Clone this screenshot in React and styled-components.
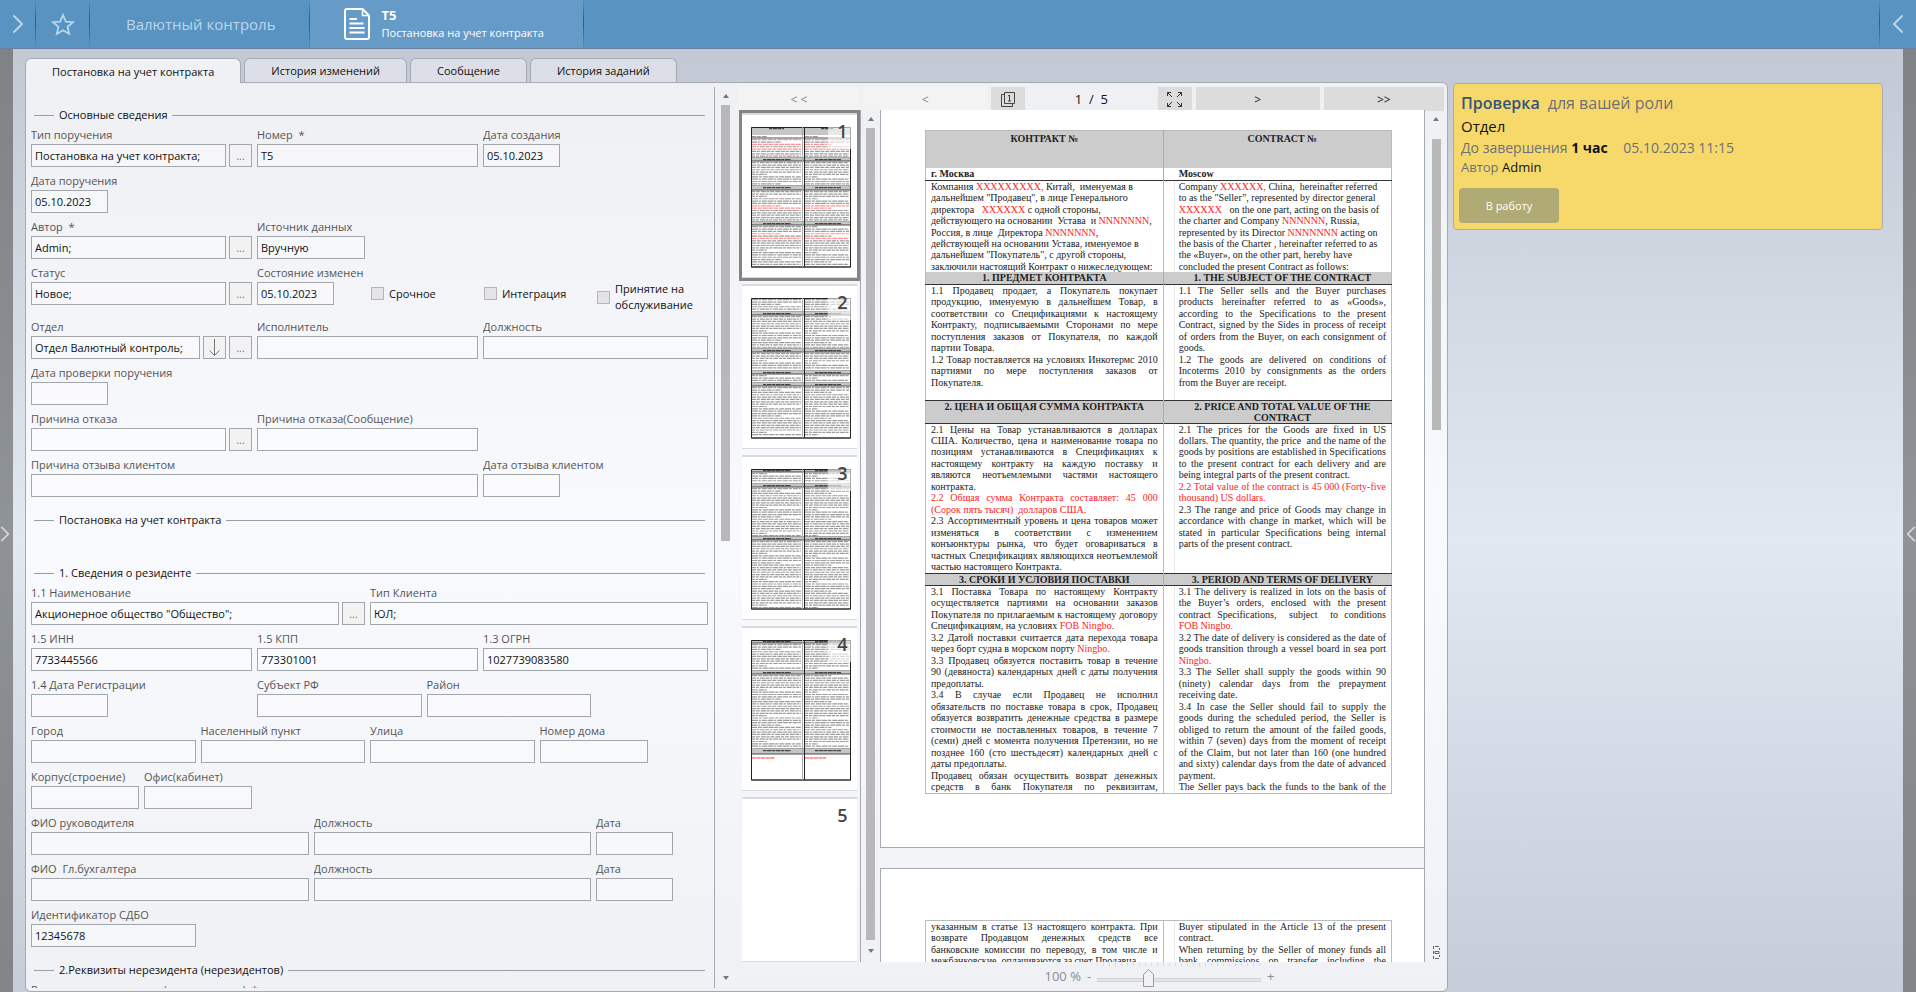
import { useId } from 'react';
import styled, { createGlobalStyle, css } from 'styled-components';

const GlobalStyle = createGlobalStyle`
  * {
    box-sizing: border-box;
  }

  body {
    margin: 0;
    font-family: 'Open Sans', 'Noto Sans', sans-serif;
    font-size: 11px;
    color: #111;
  }

  button, input {
    font: inherit;
    color: inherit;
  }

  button {
    padding: 0;
    border: 0;
    background: none;
  }
`;

// Shell

const Shell = styled.div`
  height: 100vh;
  display: grid;
  grid-template-rows: 49px minmax(0, 1fr);
  overflow: hidden;
`;

const TopBar = styled.header`
  display: flex;
  background: #5893c1;
  border-bottom: 1px solid #6b7fa3;
  color: #bcd6ea;
`;

const divider = css`
  border-image: linear-gradient(to bottom, #5893c1, #135f9f 45%, #5893c1) 1;
`;

const BarButton = styled.button`
  width: ${({ $width }) => $width}px;
  display: flex;
  align-items: center;
  justify-content: center;
  ${({ $side }) => ($side === 'left' ? 'border-left: 1px solid;' : 'border-right: 1px solid;')}
  ${divider}
`;

const SectionLink = styled.a`
  display: flex;
  align-items: center;
  padding: 0 33px 0 36px;
  border-right: 1px solid;
  ${divider}
  color: inherit;
  font-size: 15px;
  text-decoration: none;
`;

const ActiveDocument = styled.a`
  width: 274px;
  display: flex;
  align-items: center;
  gap: 12px;
  padding-left: 34px;
  background: #669bc8;
  border-right: 1px solid;
  ${divider}
  color: #fff;
  text-decoration: none;

  span {
    display: block;
    line-height: 18px;
  }

  strong {
    display: block;
    font-size: 13px;
    line-height: 18px;
  }
`;

const BarSpacer = styled.div`
  flex: 1;
`;

const Body = styled.div`
  min-height: 0;
  display: grid;
  grid-template-columns: 13px minmax(0, 1fr) 13px;
  grid-template-rows: minmax(0, 1fr);
`;

const Rail = styled.button`
  display: flex;
  align-items: center;
  justify-content: ${({ $side }) => ($side === 'left' ? 'flex-start' : 'flex-end')};
  padding-top: 26px;
  background: linear-gradient(#808285, #8f9296 50%, #828487);
  color: #d5d9de;
`;

const Main = styled.main`
  min-height: 0;
  display: grid;
  grid-template-columns: minmax(0, 1423fr) minmax(0, 430fr);
  grid-template-rows: minmax(0, 1fr);
  gap: 5px;
  padding: 9px 20px 0 12px;
  background: linear-gradient(#c3c9d4, #e1e8f2 52%, #c6cdd9);
`;

const Workspace = styled.section`
  min-height: 0;
  display: flex;
  flex-direction: column;
`;

// Tabs

const TabList = styled.div`
  display: flex;
  gap: 3px;
`;

const Tab = styled.button`
  height: ${({ $active }) => ($active ? '25px' : '24px')};
  margin-bottom: ${({ $active }) => ($active ? '-1px' : '0')};
  padding: 0 26px;
  border: 1px solid #a5a9b1;
  border-bottom: 0;
  border-radius: 6px 6px 0 0;
  background: ${({ $active }) => ($active ? '#f0f1f5' : '#dcdfe7')};
  position: relative;
`;

const Panel = styled.div`
  flex: 1;
  min-height: 0;
  display: grid;
  grid-template-columns: minmax(0, 689fr) 24px 122px 19px minmax(0, 545fr) 22px;
  grid-template-rows: 27px minmax(0, 1fr) 29px;
  border: 1px solid #a5a9b1;
  border-radius: 0 6px 6px 6px;
  background: linear-gradient(#eff0f4, #f9fafe 50%, #eff1f5);
`;

// Order form

const Form = styled.form`
  grid-row: 1 / -1;
  margin: 4px 0 3px;
  padding: 5px 5px 0;
  overflow: hidden;
  border-right: 1px solid #a5a9b1;
`;

const Legend = styled.h2`
  height: 20px;
  display: flex;
  align-items: center;
  gap: 5px;
  margin: ${({ $gap }) => $gap}px 4px -1px 3px;
  font-size: inherit;
  font-weight: 400;
  line-height: 20px;

  &:before,
  &:after {
    content: '';
    height: 1px;
    background: #9a9da3;
  }

  &:before {
    width: 20px;
  }

  &:after {
    flex: 1;
  }
`;

const FormRow = styled.div`
  display: grid;
  grid-template-columns: repeat(12, minmax(0, 1fr));
  padding-bottom: 3px;
`;

const FieldCell = styled.div`
  grid-column: span ${({ $span }) => $span};
  min-width: 0;
  padding-right: ${({ $edge }) => ($edge ? 1 : 5)}px;

  label {
    display: block;
    height: 20px;
    overflow: hidden;
    color: #555;
    line-height: 22px;
    white-space: pre;
  }
`;

const Control = styled.div`
  display: flex;
  gap: 3px;
`;

const TextInput = styled.input`
  flex: ${({ $date }) => ($date ? '0 0 77px' : '1 1 0')};
  min-width: 0;
  height: 23px;
  padding: 0 3px;
  border: 1px solid #a3a6ab;
  border-radius: 0;
  background: rgba(255, 255, 255, 0.4);
  outline: 0;
`;

const PickButton = styled.button`
  width: 23px;
  height: 23px;
  display: flex;
  align-items: center;
  justify-content: center;
  border: 1px solid #a3a6ab;
  background: #f2f2f2;
  color: #777;
`;

const CheckCell = styled.label`
  grid-column: span 2;
  min-height: 25px;
  display: flex;
  align-items: center;
  align-self: start;
  gap: 5px;
  margin-top: 19px;
  padding-left: 1px;
  line-height: 16px;

  input {
    flex: none;
    appearance: none;
    width: 13px;
    height: 13px;
    margin: 0;
    border: 1px solid #b4b6ba;
    background: #e4e4e4;
  }
`;

const Field = ({ label, value, span, edge, date, pick, arrow }) => {
  const id = useId();
  return (
    <FieldCell $span={span} $edge={edge}>
      <label htmlFor={id}>{label}</label>
      <Control>
        <TextInput id={id} defaultValue={value} $date={date} />
        {arrow && (
          <PickButton type="button" aria-label="Вниз">
            <svg width="13" height="19" viewBox="0 0 13 19" fill="none" stroke="#777">
              <path d="M6.5 1v16M1.5 12.5l5 5 5-5" />
            </svg>
          </PickButton>
        )}
        {pick && <PickButton type="button">...</PickButton>}
      </Control>
    </FieldCell>
  );
};

const Check = ({ children }) => (
  <CheckCell>
    <input type="checkbox" />
    <span>{children}</span>
  </CheckCell>
);

// Scroll bars

const ScrollTrack = styled.div`
  grid-row: ${({ $full }) => ($full ? '1 / -1' : '2')};
  display: grid;
  grid-template-rows: ${({ $rows }) => $rows};
  justify-items: center;
  align-items: center;
  margin: ${({ $full }) => ($full ? '4px 0' : '0')};
  padding-right: ${({ $shift }) => $shift || 0}px;
`;

const ScrollThumb = styled.div`
  width: 9px;
  height: 100%;
  background: #b8b8b8;
`;

const Arrow = ({ down }) => (
  <svg width="6" height="4" viewBox="0 0 6 4" fill="#777">
    <path d={down ? 'M0 0h6L3 4z' : 'M0 4h6L3 0z'} />
  </svg>
);

// Viewer tool bar

const ViewerBar = styled.div`
  grid-column: 3 / -1;
  display: grid;
  grid-template-columns: 120px minmax(0, 124fr) 34px minmax(0, 124fr) 34px minmax(0, 124fr) minmax(0, 120fr);
  gap: 4px;
  padding: 4px 3px 0 0;
`;

const NavButton = styled.button`
  background: ${({ disabled }) => (disabled ? '#f3f3f3' : '#dcdcdc')};
  color: ${({ disabled }) => (disabled ? '#888' : '#222')};
  display: flex;
  align-items: center;
  justify-content: center;
  padding-top: 1px;
  font-size: 12px;
`;

const PageCounter = styled.div`
  font-size: 13px;
  line-height: 24px;
  text-align: center;
`;

// Thumbnails

const ThumbList = styled.div`
  grid-column: 3;
  grid-row: 2;
  display: flex;
  flex-direction: column;
  overflow: hidden;
  border-right: 1px solid #a5a9b1;
`;

const Thumb = styled.button`
  flex: none;
  width: 121px;
  height: 171px;
  position: relative;
  border: 3px solid ${({ $active }) => ($active ? '#858585' : 'transparent')};
  background: linear-gradient(#d8dade, #d8dade) 0 0 / 100% 2px no-repeat content-box,
    linear-gradient(#d8dade, #d8dade) 0 100% / 100% 1px no-repeat content-box,
    linear-gradient(#fff, #fff) content-box;

  svg {
    display: block;
    margin: 13px auto 9px 9px;
  }
`;

const ThumbNumber = styled.span`
  position: absolute;
  top: 2px;
  right: 0;
  width: 29px;
  height: 34px;
  background: rgba(255, 255, 255, 0.6);
  color: #444;
  font-size: 18px;
  font-weight: 600;
  line-height: 32px;
  text-align: center;
`;

// kind, height, red lines
const THUMB_PAGES = [
  [
    ['fill', 8], ['text', 3], ['text', 20, [0, 2, 4]], ['head', 3], ['text', 25], ['head', 4],
    ['text', 32, [6, 7]], ['head', 3], ['text', 42, [3, 5]],
  ],
  [
    ['text', 14], ['head', 3], ['text', 34], ['head', 3], ['text', 19], ['head', 3],
    ['text', 9], ['head', 3], ['text', 52],
  ],
  [['head', 3], ['text', 12], ['head', 3], ['text', 50], ['head', 3], ['text', 69]],
  [['head', 3], ['text', 28], ['head', 3], ['text', 75], ['head', 5], ['last', 26]],
  [],
];

const ThumbPicture = ({ rows, seed }) => {
  const shapes = [];
  let y = 0;
  rows.forEach(([kind, height, red = []], index) => {
    if (kind === 'head' || kind === 'fill') {
      shapes.push(<rect key={`f${index}`} x="0" y={y} width="100" height={height} fill="#c6c6c6" />);
      shapes.push(
        <path
          key={`h${index}`}
          d={kind === 'fill' ? `M18 ${y + 1.6}h15M70 ${y + 1.6}h13` : `M12 ${y + 1.6}h28M64 ${y + 1.6}h26`}
          stroke="#444"
          strokeWidth="1.4"
          strokeDasharray="3 .6 5 .5"
        />
      );
    }
    if (kind === 'text') {
      const count = Math.floor((height - 0.5) / 2.35);
      for (let line = 0; line < count; line += 1) {
        const lineY = y + 1.7 + line * 2.35;
        [1, 54].forEach((x, side) => {
          const isRed = red.includes(line);
          const roll = (line * 7 + index * 5 + seed * 3 + side * 4) % 11;
          const full = side ? 44 : 49;
          const width = roll === 0 || height < 4 ? full * 0.3 : roll === 6 ? full * 0.6 : full;
          shapes.push(
            <path
              key={`${index}-${line}-${side}`}
              d={`M${x} ${lineY}h${width}`}
              stroke={isRed ? '#ff9090' : '#9c9c9c'}
              strokeWidth="1.2"
              strokeDasharray={`${3 + (roll % 4)} .8 ${2 + (roll % 3)} 1 5 .7`}
            />
          );
        });
      }
    }
    if (kind === 'last') {
      shapes.push(
        <path key="last" d={`M1 ${y + 4}h23M54 ${y + 4}h21`} stroke="#ff7a7a" strokeWidth="1.3" strokeDasharray="4 .5" />
      );
    }
    y += height;
    if (kind !== 'fill') {
      shapes.push(<path key={`b${index}`} d={`M0 ${y}h100`} stroke="#222" strokeWidth=".8" />);
    }
  });
  return (
    <svg width="100" height="141" viewBox="0 0 100 141" aria-hidden="true">
      {shapes}
      {rows.length > 0 && (
        <>
          <path d="M.5 .5h99v139.500h-99z" fill="none" stroke="#222" />
          <path d="M51.500 0v140" stroke="#aaa" />
          <path d="M53.500 0v140" stroke="#222" />
        </>
      )}
    </svg>
  );
};

// Contract pages

const Pages = styled.div`
  grid-column: 5;
  grid-row: 2;
  display: flex;
  flex-direction: column;
  gap: 20px;
  overflow: hidden;
  border-right: 1px solid #a5a9b1;
`;

const Page = styled.article`
  flex: none;
  padding: ${({ $first }) => ($first ? '20px 32px 53px 44px' : '51px 32px 0 44px')};
  border: solid #a5a9b1;
  border-width: ${({ $first }) => ($first ? '0 0 1px 1px' : '1px 0 0 1px')};
  background: #fff;
`;

const ContractTable = styled.table`
  width: 100%;
  table-layout: fixed;
  border-collapse: collapse;
  border: 1px solid #bbb;
  color: #222;
  font-family: 'Liberation Serif', serif;
  font-size: 10px;
  line-height: 11px;
`;

const ContractRow = styled.tr`
  height: ${({ $height }) => $height}px;
  background: ${({ $head }) => ($head ? '#ccc' : '#fff')};
  border-top: ${({ $over }) => ($over ? '1px solid #333' : '0')};
  border-bottom: ${({ $under }) => ($under ? '1px solid #333' : '0')};
`;

const ContractHead = styled.th`
  padding: ${({ $top }) => ($top ? '2px 5px 0' : '0 5px')};
  vertical-align: top;
  text-align: ${({ $left }) => ($left ? 'left' : 'center')};
  font-weight: 700;

  &:last-child {
    border-left: 1px solid #aaa;
    padding-left: 15px;
  }
`;

const ContractCell = styled.td`
  padding: 0 5px;
  vertical-align: top;

  &:last-child {
    border-left: 1px solid #bbb;
    padding-left: 15px;
    background: linear-gradient(#e8e8e8, #e8e8e8) 10px 0 / 1px 100% no-repeat;
  }
`;

const Lines = styled.div`
  height: ${({ $height }) => $height}px;
  display: grid;
  grid-template-columns: minmax(0, 1fr);
  grid-template-rows: repeat(${({ $count }) => $count}, minmax(0, 1fr));
`;

const Line = styled.div`
  white-space: nowrap;
  text-align-last: ${({ $justify }) => ($justify ? 'justify' : 'left')};

  em {
    color: #f22;
    font-style: normal;
  }
`;

// a trailing "|" ends a paragraph, {braces} mark the red wording
const CONTRACT = [
  { head: ['КОНТРАКТ №', 'CONTRACT №'], height: 37, top: true },
  { head: ['г. Москва', 'Moscow'], height: 13, left: true, under: true },
  {
    height: 91,
    count: 8,
    ru: [
      'Компания {XXXXXXXXX,} Китай,\u00a0 именуемая в|',
      'дальнейшем "Продавец", в лице Генерального|',
      'директора\u00a0\u00a0 {XXXXXX} с одной стороны,|',
      'действующего на основании\u00a0 Устава\u00a0 и {NNNNNNN},|',
      'Россия, в лице\u00a0 Директора {NNNNNNN},|',
      'действующей на основании Устава, именуемое в|',
      'дальнейшем "Покупатель", с другой стороны,|',
      'заключили настоящий Контракт о нижеследующем:|',
    ],
    en: [
      'Company {XXXXXX,} China,\u00a0 hereinafter referred|',
      'to as the "Seller”, represented by director general|',
      '{XXXXXX}\u00a0\u00a0 on the one part, acting on the basis of|',
      'the charter and Company {NNNNNN}, Russia,|',
      'represented by its Director {NNNNNNN} acting on|',
      'the basis of the Charter , hereinafter referred to as|',
      'the «Buyer», on the other part, hereby have|',
      'concluded the present Contract as follows:|',
    ],
  },
  { head: ['1. ПРЕДМЕТ КОНТРАКТА', '1. THE SUBJECT OF THE CONTRACT'], height: 12, under: true },
  {
    height: 115,
    count: 10,
    ru: [
      '1.1 Продавец продает, а Покупатель покупает',
      'продукцию, именуемую в дальнейшем Товар, в',
      'соответствии со Спецификациями к настоящему',
      'Контракту, подписываемыми Сторонами по мере',
      'поступления заказов от Покупателя, по каждой',
      'партии Товара.|',
      '1.2 Товар поставляется на условиях Инкотермс 2010',
      'партиями по мере поступления заказов от',
      'Покупателя.|',
    ],
    en: [
      '1.1 The Seller sells and the Buyer purchases',
      'products hereinafter referred to as «Goods»,',
      'according to the Specifications to the present',
      'Contract, signed by the Sides in process of receipt',
      'of orders from the Buyer, on each consignment of',
      'goods.|',
      '1.2 The goods are delivered on conditions of',
      'Incoterms 2010 by consignments as the orders',
      'from the Buyer are receipt.|',
    ],
  },
  {
    head: ['2. ЦЕНА И ОБЩАЯ СУММА КОНТРАКТА', '2. PRICE AND TOTAL VALUE OF THE CONTRACT'],
    height: 23,
    over: true,
    under: true,
  },
  {
    height: 149,
    count: 13,
    ru: [
      '2.1 Цены на Товар устанавливаются в долларах',
      'США. Количество, цена и наименование товара по',
      'позициям устанавливаются в Спецификациях к',
      'настоящему контракту на каждую поставку и',
      'являются неотъемлемыми частями настоящего',
      'контракта.|',
      '{2.2 Общая сумма Контракта составляет: 45 000}',
      '{(Сорок пять тысяч)\u00a0 долларов США.}|',
      '2.3 Ассортиментный уровень и цена товаров может',
      'изменяться в соответствии с изменением',
      'конъюнктуры рынка, что будет оговариваться в',
      'частных Спецификациях являющихся неотъемлемой',
      'частью настоящего Контракта.|',
    ],
    en: [
      '2.1 The prices for the Goods are fixed in US',
      'dollars. The quantity, the price\u00a0 and the name of the',
      'goods by positions are established in Specifications',
      'to the present contract for each delivery and are',
      'being integral parts of the present contract.|',
      '{2.2 Total value of the contract is 45 000 (Forty-five}',
      '{thousand) US dollars.}|',
      '2.3 The range and price of Goods may change in',
      'accordance with change in market, which will be',
      'stated in particular Specifications being internal',
      'parts of the present contract.|',
    ],
  },
  {
    head: ['3. СРОКИ И УСЛОВИЯ ПОСТАВКИ', '3. PERIOD AND TERMS OF DELIVERY'],
    height: 12,
    over: true,
    under: true,
  },
  {
    height: 207,
    count: 18,
    ru: [
      '3.1 Поставка Товара по настоящему Контракту',
      'осуществляется партиями на основании заказов',
      'Покупателя по прилагаемым к настоящему договору',
      'Спецификациям, на условиях {FOB Ningbo.}|',
      '3.2 Датой поставки считается дата перехода товара',
      'через борт судна в морском порту {Ningbo.}|',
      '3.3 Продавец обязуется поставить товар в течение',
      '90 (девяноста) календарных дней с даты получения',
      'предоплаты.|',
      '3.4 В случае если Продавец не исполнил',
      'обязательств по поставке товара в срок, Продавец',
      'обязуется возвратить денежные средства в размере',
      'стоимости не поставленных товаров, в течение 7',
      '(семи) дней с момента получения Претензии, но не',
      'позднее 160 (сто шестьдесят) календарных дней с',
      'даты предоплаты.|',
      'Продавец обязан осуществить возврат денежных',
      'средств в банк Покупателя по реквизитам,',
    ],
    en: [
      '3.1 The delivery is realized in lots on the basis of',
      'the Buyer’s orders, enclosed with the present',
      'contract Specifications,\u00a0 subject\u00a0 to conditions',
      '{FOB Ningbo.}|',
      '3.2 The date of delivery is considered as the date of',
      'goods transition through a vessel board in sea port',
      '{Ningbo.}|',
      '3.3 The Seller shall supply the goods within 90',
      '(ninety) calendar days from the prepayment',
      'receiving date.|',
      '3.4 In case the Seller should fail to supply the',
      'goods during the scheduled period, the Seller is',
      'obliged to return the amount of the failed goods,',
      'within 7 (seven) days from the moment of receipt',
      'of the Claim, but not later than 160 (one hundred',
      'and sixty) calendar days from the date of advanced',
      'payment.|',
      'The Seller pays back the funds to the bank of the',
    ],
  },
];

const CONTRACT_NEXT = [
  {
    height: 58,
    count: 5,
    ru: [
      'указанным в статье 13 настоящего контракта. При',
      'возврате Продавцом денежных средств все',
      'банковские комиссии по переводу, в том числе и',
      'межбанковские, оплачиваются за счет Продавца.|',
    ],
    en: [
      'Buyer stipulated in the Article 13 of the present',
      'contract.|',
      'When returning by the Seller of money funds all',
      'bank commissions on transfer including the',
    ],
  },
];

const renderLine = (source, index) => {
  const justify = !source.endsWith('|');
  const parts = source.replace('|', '').split(/[{}]/);
  return (
    <Line key={index} $justify={justify}>
      {parts.map((part, i) => (i % 2 ? <em key={i}>{part}</em> : part))}
    </Line>
  );
};

const Contract = ({ rows }) => (
  <ContractTable>
    <colgroup>
      <col width="51%" />
      <col width="49%" />
    </colgroup>
    <tbody>
      {rows.map((row, index) =>
        row.head ? (
          <ContractRow key={index} $height={row.height} $head={!row.left} $over={row.over} $under={row.under}>
            {row.head.map((text) => (
              <ContractHead key={text} $left={row.left} $top={row.top}>
                {text}
              </ContractHead>
            ))}
          </ContractRow>
        ) : (
          <ContractRow key={index} $height={row.height}>
            {[row.ru, row.en].map((lines, side) => (
              <ContractCell key={side}>
                <Lines $height={row.height} $count={row.count}>
                  {lines.map(renderLine)}
                </Lines>
              </ContractCell>
            ))}
          </ContractRow>
        )
      )}
    </tbody>
  </ContractTable>
);

// Zoom bar

const ZoomBar = styled.div`
  grid-column: 3 / -1;
  grid-row: 3;
  display: flex;
  justify-content: center;
  gap: 6px;
  padding-right: 24px;
  padding-left: 157px;
  color: #8a8d92;
  font-size: 13px;
  line-height: 28px;

  button {
    align-self: start;
    line-height: 28px;
  }
`;

const ZoomRange = styled.input`
  appearance: none;
  width: 164px;
  height: 26px;
  margin: 0;
  background:
    repeating-linear-gradient(to right, #d8dade 0 1px, transparent 1px 6px) 0 1px / 100% 3px no-repeat,
    linear-gradient(#d0d2d5, #d0d2d5) 0 16px / 100% 1px no-repeat,
    linear-gradient(#d0d2d5, #d0d2d5) 0 19px / 100% 1px no-repeat,
    linear-gradient(#e6e6e6, #e6e6e6) 0 17px / 100% 2px no-repeat;

  &::-webkit-slider-runnable-track {
    height: 18px;
    margin-top: 5px;
  }

  &::-webkit-slider-thumb {
    appearance: none;
    width: 11px;
    height: 18px;
    background: url("data:image/svg+xml,%3Csvg xmlns='http://www.w3.org/2000/svg' width='11' height='18'%3E%3Cpath d='M.5 5.500l5-5 5 5v12H.5z' fill='%23f2f2f2' stroke='%23999'/%3E%3C/svg%3E");
  }
`;

const FitIcon = () => (
  <svg width="7" height="13" viewBox="0 0 7 13" fill="none" stroke="#666">
    <path d="M.5 0v3M.5 5v3M.5 10v3M2 .5h4M2 12.500h4M6.500 2v2M6.500 9v2" />
    <path d="M2 5.500h4v2H2z" />
  </svg>
);

// Task card

const TaskCard = styled.aside`
  align-self: start;
  min-height: 147px;
  margin-top: 25px;
  padding: 8px 5px 5px 7px;
  border: 1px solid #a9abb0;
  border-radius: 4px;
  background: #f7d96b;
  color: #6f7075;

  h3, p {
    margin: 0;
    font-weight: 400;
  }

  h3 {
    font-size: 16px;
    line-height: 22px;
  }

  h3 strong {
    margin-right: 8px;
    color: #34567d;
    font-weight: 600;
  }

  b {
    color: #111;
  }

  span {
    color: #111;
  }
`;

const TaskLine = styled.p`
  font-size: ${({ $size }) => $size}px;
  line-height: ${({ $height }) => $height}px;

  time {
    margin-left: 12px;
  }
`;

const TakeButton = styled.button`
  width: 100px;
  height: 35px;
  margin: 12px 0 0 -2px;
  border-radius: 4px;
  background: #b0aa74;
  color: #fff;
`;

const TABS = ['Постановка на учет контракта', 'История изменений', 'Сообщение', 'История заданий'];

const Chevron = ({ left, width = 12, height = 20, stroke = 2 }) => (
  <svg width={width} height={height} viewBox="0 0 12 20" fill="none" stroke="currentColor" strokeWidth={stroke}>
    <path d={left ? 'M10.500 1.500L2 10l8.500 8.500' : 'M1.500 1.500L10 10l-8.500 8.500'} />
  </svg>
);

const OrderForm = () => (
  <Form onSubmit={(event) => event.preventDefault()}>
    <Legend $gap={13}>Основные сведения</Legend>
    <FormRow>
      <Field label="Тип поручения" value="Постановка на учет контракта;" span={4} pick />
      <Field label="Номер  *" value="Т5" span={4} />
      <Field label="Дата создания" value="05.10.2023" span={4} date />
    </FormRow>
    <FormRow>
      <Field label="Дата поручения" value="05.10.2023" span={4} date />
    </FormRow>
    <FormRow>
      <Field label="Автор  *" value="Admin;" span={4} pick />
      <Field label="Источник данных" value="Вручную" span={2} />
    </FormRow>
    <FormRow>
      <Field label="Статус" value="Новое;" span={4} pick />
      <Field label="Состояние изменен" value="05.10.2023" span={2} date />
      <Check>Срочное</Check>
      <Check>Интеграция</Check>
      <Check>Принятие на обслуживание</Check>
    </FormRow>
    <FormRow>
      <Field label="Отдел" value="Отдел Валютный контроль;" span={4} arrow pick />
      <Field label="Исполнитель" span={4} />
      <Field label="Должность" span={4} edge />
    </FormRow>
    <FormRow>
      <Field label="Дата проверки поручения" span={4} date />
    </FormRow>
    <FormRow>
      <Field label="Причина отказа" span={4} pick />
      <Field label="Причина отказа(Сообщение)" span={4} />
    </FormRow>
    <FormRow>
      <Field label="Причина отзыва клиентом" span={8} />
      <Field label="Дата отзыва клиентом" span={4} date />
    </FormRow>

    <Legend $gap={10}>Постановка на учет контракта</Legend>
    <Legend $gap={34}>1. Сведения о резиденте</Legend>
    <FormRow>
      <Field label="1.1 Наименование" value={'Акционерное общество "Общество";'} span={6} pick />
      <Field label="Тип Клиента" value="ЮЛ;" span={6} edge />
    </FormRow>
    <FormRow>
      <Field label="1.5 ИНН" value="7733445566" span={4} />
      <Field label="1.5 КПП" value="773301001" span={4} />
      <Field label="1.3 ОГРН" value="1027739083580" span={4} edge />
    </FormRow>
    <FormRow>
      <Field label="1.4 Дата Регистрации" span={4} date />
      <Field label="Субъект РФ" span={3} />
      <Field label="Район" span={3} />
    </FormRow>
    <FormRow>
      <Field label="Город" span={3} />
      <Field label="Населенный пункт" span={3} />
      <Field label="Улица" span={3} />
      <Field label="Номер дома" span={2} />
    </FormRow>
    <FormRow>
      <Field label="Корпус(строение)" span={2} />
      <Field label="Офис(кабинет)" span={2} />
    </FormRow>
    <FormRow>
      <Field label="ФИО руководителя" span={5} />
      <Field label="Должность" span={5} />
      <Field label="Дата" span={2} date />
    </FormRow>
    <FormRow>
      <Field label="ФИО  Гл.бухгалтера" span={5} />
      <Field label="Должность" span={5} />
      <Field label="Дата" span={2} date />
    </FormRow>
    <FormRow>
      <Field label="Идентификатор СДБО" value="12345678" span={3} />
    </FormRow>

    <Legend $gap={10}>2.Реквизиты нерезидента (нерезидентов)</Legend>
    <FormRow>
      <Field label="Реквизиты нерезидента (нерезидентов)  *" span={6} />
    </FormRow>
  </Form>
);

const App = () => {
  return (
    <>
      <GlobalStyle />
      <Shell>
        <TopBar>
          <BarButton $width={36} aria-label="Развернуть меню">
            <Chevron />
          </BarButton>
          <BarButton $width={54} aria-label="Избранное">
            <svg width="24" height="23" viewBox="0 0 24 23" fill="none" stroke="currentColor" strokeWidth="1.800">
              <path d="M12 2l2.800 6.600 7.200.6-5.500 4.700 1.700 7L12 17.200 5.800 20.900l1.700-7L2 9.200l7.200-.6z" />
            </svg>
          </BarButton>
          <SectionLink href="#currency">Валютный контроль</SectionLink>
          <ActiveDocument href="#order">
            <svg width="26" height="32" viewBox="0 0 26 32" fill="none" stroke="currentColor" strokeWidth="2">
              <path d="M3 1h15.500l6.500 6.500V29a2 2 0 0 1-2 2H3a2 2 0 0 1-2-2V3a2 2 0 0 1 2-2z" />
              <path d="M18.500 1v6.500H25" strokeWidth="1.500" />
              <path d="M5.500 11H13M5.500 15.500h14M5.500 20h15M5.500 24.500h15" />
            </svg>
            <span>
              <strong>Т5</strong>
              Постановка на учет контракта
            </span>
          </ActiveDocument>
          <BarSpacer />
          <BarButton $width={37} $side="left" aria-label="Развернуть панель">
            <Chevron left />
          </BarButton>
        </TopBar>

        <Body>
          <Rail $side="left" aria-label="Показать левую панель">
            <Chevron width={10} height={18} />
          </Rail>

          <Main>
            <Workspace>
              <TabList role="tablist">
                {TABS.map((tab, index) => (
                  <Tab key={tab} role="tab" aria-selected={index === 0} $active={index === 0}>
                    {tab}
                  </Tab>
                ))}
              </TabList>

              <Panel>
                <OrderForm />
                <ScrollTrack $full $rows="18px 437fr 429fr 18px" $shift={3}>
                  <Arrow />
                  <ScrollThumb />
                  <i />
                  <Arrow down />
                </ScrollTrack>

                <ViewerBar>
                  <NavButton disabled>&lt; &lt;</NavButton>
                  <NavButton disabled>&lt;</NavButton>
                  <NavButton aria-label="Страницы">
                    <svg width="14" height="15" viewBox="0 0 14 15" fill="none" stroke="#444">
                      <path d="M3.500 .5h10v11h-10zM3.500 2.500h-3v12h11v-3M7 4l1.500-1v6M7 9h3" />
                    </svg>
                  </NavButton>
                  <PageCounter>1&nbsp; /&nbsp; 5</PageCounter>
                  <NavButton aria-label="Во весь экран">
                    <svg width="15" height="15" viewBox="0 0 15 15" fill="none" stroke="#333">
                      <path d="M.5 4V.5H4M.5 .5L5 5M11 .5h3.500V4M14.500 .5L10 5M.5 11v3.500H4M.5 14.500L5 10M11 14.500h3.500V11M14.500 14.500L10 10" />
                    </svg>
                  </NavButton>
                  <NavButton>&gt;</NavButton>
                  <NavButton>&gt;&gt;</NavButton>
                </ViewerBar>

                <ThumbList>
                  {THUMB_PAGES.map((rows, index) => (
                    <Thumb key={index} $active={index === 0}>
                      <ThumbPicture rows={rows} seed={index} />
                      <ThumbNumber>{index + 1}</ThumbNumber>
                    </Thumb>
                  ))}
                </ThumbList>
                <ScrollTrack $rows="18px minmax(0, 1fr) 22px">
                  <Arrow />
                  <ScrollThumb />
                  <Arrow down />
                </ScrollTrack>

                <Pages>
                  <Page $first>
                    <Contract rows={CONTRACT} />
                  </Page>
                  <Page>
                    <Contract rows={CONTRACT_NEXT} />
                  </Page>
                </Pages>
                <ScrollTrack $rows="18px 11px 291fr 512fr 20px">
                  <Arrow />
                  <i />
                  <ScrollThumb />
                  <i />
                  <FitIcon />
                </ScrollTrack>

                <ZoomBar>
                  <label htmlFor="zoom">100 %</label>
                  <button aria-label="Уменьшить">-</button>
                  <ZoomRange id="zoom" type="range" min="0" max="100" defaultValue="30" />
                  <button aria-label="Увеличить">+</button>
                </ZoomBar>
              </Panel>
            </Workspace>

            <TaskCard>
              <h3>
                <strong>Проверка</strong>
                для вашей роли
              </h3>
              <TaskLine $size={15} $height={24}>
                <span>Отдел</span>
              </TaskLine>
              <TaskLine $size={14} $height={20}>
                До завершения <b>1 час</b> <time>05.10.2023 11:15</time>
              </TaskLine>
              <TaskLine $size={13} $height={18}>
                Автор <span>Admin</span>
              </TaskLine>
              <TakeButton>В работу</TakeButton>
            </TaskCard>
          </Main>

          <Rail $side="right" aria-label="Показать правую панель">
            <Chevron left width={10} height={18} />
          </Rail>
        </Body>
      </Shell>
    </>
  );
};

export default App;
